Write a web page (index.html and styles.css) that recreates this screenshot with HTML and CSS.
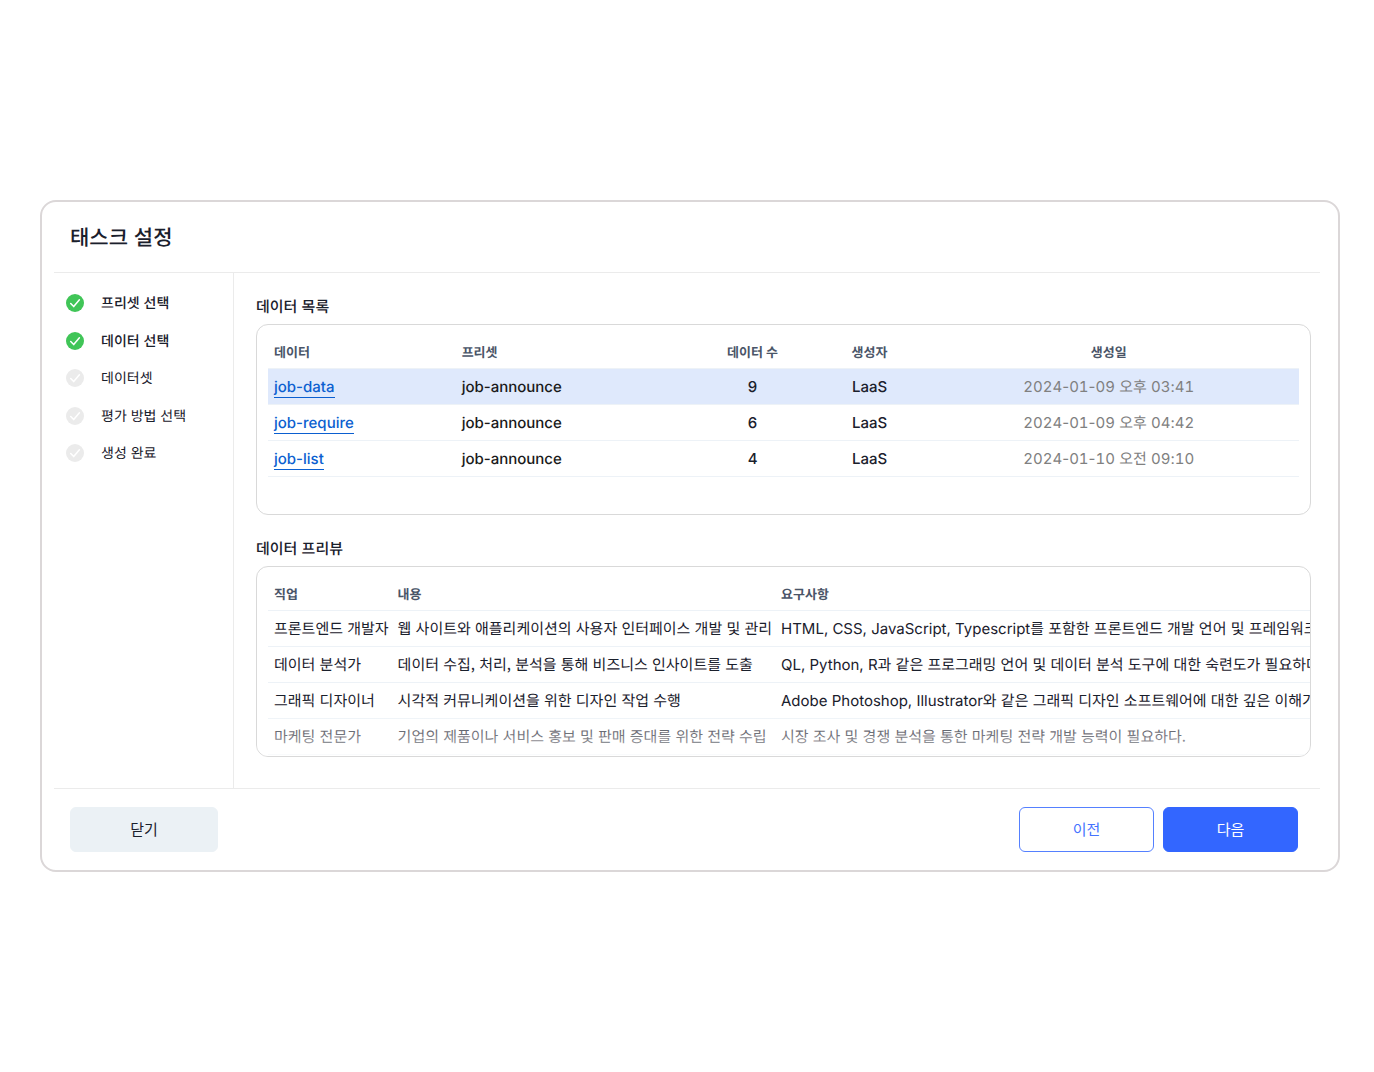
FILE: index.html
```html
<!DOCTYPE html>
<html lang="ko">
<head>
<meta charset="utf-8">
<meta name="viewport" content="width=device-width, initial-scale=1">
<title>태스크 설정</title>
<link rel="stylesheet" href="styles.css">
</head>
<body>
<main class="dialog">
  <header class="dialog-header"><h1>태스크 설정</h1></header>
  <div class="dialog-body">
    <aside class="sidebar">
      <ol class="steps">
        <li class="step done"><svg viewBox="0 0 18 18" aria-hidden="true"><circle cx="9" cy="9" r="9"/><path d="M4.7 9.5 7.7 12.6 13.4 5.8"/></svg>프리셋 선택</li>
        <li class="step done"><svg viewBox="0 0 18 18" aria-hidden="true"><circle cx="9" cy="9" r="9"/><path d="M4.7 9.5 7.7 12.6 13.4 5.8"/></svg>데이터 선택</li>
        <li class="step"><svg viewBox="0 0 18 18" aria-hidden="true"><circle cx="9" cy="9" r="9"/><path d="M4.7 9.5 7.7 12.6 13.4 5.8"/></svg>데이터셋</li>
        <li class="step"><svg viewBox="0 0 18 18" aria-hidden="true"><circle cx="9" cy="9" r="9"/><path d="M4.7 9.5 7.7 12.6 13.4 5.8"/></svg>평가 방법 선택</li>
        <li class="step"><svg viewBox="0 0 18 18" aria-hidden="true"><circle cx="9" cy="9" r="9"/><path d="M4.7 9.5 7.7 12.6 13.4 5.8"/></svg>생성 완료</li>
      </ol>
    </aside>
    <div class="content">
      <section>
        <h2>데이터 목록</h2>
        <div class="card">
          <table class="list">
            <colgroup><col class="col-data"><col class="col-preset"><col class="col-count"><col class="col-author"><col class="col-date"></colgroup>
            <thead>
              <tr><th>데이터</th><th>프리셋</th><th class="center">데이터 수</th><th class="center">생성자</th><th class="center">생성일</th></tr>
            </thead>
            <tbody>
              <tr class="selected"><td><a href="#">job-data</a></td><td class="preset">job-announce</td><td class="center">9</td><td class="center">LaaS</td><td class="center date"><b>2024</b>-<b>01</b>-<b>09</b> 오후 <b>03</b>:<b>41</b></td></tr>
              <tr><td><a href="#">job-require</a></td><td class="preset">job-announce</td><td class="center">6</td><td class="center">LaaS</td><td class="center date"><b>2024</b>-<b>01</b>-<b>09</b> 오후 <b>04</b>:<b>42</b></td></tr>
              <tr><td><a href="#">job-list</a></td><td class="preset">job-announce</td><td class="center">4</td><td class="center">LaaS</td><td class="center date"><b>2024</b>-<b>01</b>-<b>10</b> 오전 <b>09</b>:<b>10</b></td></tr>
            </tbody>
          </table>
        </div>
      </section>
      <section>
        <h2>데이터 프리뷰</h2>
        <div class="card preview-card">
          <table class="preview">
            <thead>
              <tr><th>직업</th><th>내용</th><th>요구사항</th></tr>
            </thead>
            <tbody>
              <tr><td>프론트엔드 개발자</td><td>웹 사이트와 애플리케이션의 사용자 인터페이스 개발 및 관리</td><td><span class="latin">HTML, CSS, JavaScript, Typescript</span>를 포함한 프론트엔드 개발 언어 및 프레임워크에</td></tr>
              <tr><td>데이터 분석가</td><td>데이터 수집, 처리, 분석을 통해 비즈니스 인사이트를 도출</td><td><span class="latin">QL, Python, R</span>과 같은 프로그래밍 언어 및 데이터 분석 도구에 대한 숙련도가 필요하다.</td></tr>
              <tr><td>그래픽 디자이너</td><td>시각적 커뮤니케이션을 위한 디자인 작업 수행</td><td><span class="latin">Adobe Photoshop, Illustrator</span>와 같은 그래픽 디자인 소프트웨어에 대한 깊은 이해가 필</td></tr>
              <tr><td>마케팅 전문가</td><td>기업의 제품이나 서비스 홍보 및 판매 증대를 위한 전략 수립</td><td>시장 조사 및 경쟁 분석을 통한 마케팅 전략 개발 능력이 필요하다.</td></tr>
            </tbody>
          </table>
        </div>
      </section>
    </div>
  </div>
  <footer class="dialog-footer">
    <button type="button" class="btn btn-close">닫기</button>
    <div class="actions">
      <button type="button" class="btn btn-prev">이전</button>
      <button type="button" class="btn btn-next">다음</button>
    </div>
  </footer>
</main>
</body>
</html>
```
FILE: styles.css
```css
* { box-sizing: border-box; }

body {
  margin: 0;
  padding: 200px 34px 200px 40px;
  background: #fff;
  color: #1a202c;
  font-family: "Noto Sans CJK KR", sans-serif;
  font-size: 15px;
  line-height: 20px;
  text-rendering: geometricPrecision;
}

h1, h2, ol { margin: 0; padding: 0; }

.dialog {
  padding: 0 18px 0 12px;
  border: 2px solid #dbd7d8;
  border-radius: 16px;
}

.dialog-header {
  padding: 20px 16px;
  border-bottom: 1px solid #ebebeb;
}

h1 {
  font-size: 21px;
  font-weight: 500;
  line-height: 30px;
}

.dialog-body { display: flex; }

.sidebar {
  flex: 0 0 180px;
  padding: 20px 12px;
  border-right: 1px solid #ebebeb;
}

.steps {
  display: flex;
  flex-direction: column;
  justify-content: space-between;
  min-height: 170px;
  list-style: none;
  font-size: 14px;
}

.step {
  display: flex;
  align-items: center;
  gap: 17px;
}

.step.done { font-weight: 500; }
.step svg { width: 18px; height: 18px; }
.step circle { fill: #ebebeb; }
.step.done circle { fill: #40c557; }

.step path {
  fill: none;
  stroke: #fff;
  stroke-width: 1.5;
  stroke-linecap: round;
  stroke-linejoin: round;
}

.content {
  display: flex;
  flex: 1;
  flex-direction: column;
  gap: 24px;
  min-width: 0;
  padding: 24px 9px 31px 22px;
}

h2 {
  margin-bottom: 7px;
  font-size: 15px;
  font-weight: 500;
  line-height: 20px;
}

.card {
  position: relative;
  min-height: 191px;
  padding: 11px;
  overflow: hidden;
  border: 1px solid #d9d9d9;
  border-radius: 12px;
}

.preview-card { padding-bottom: 0; }

.preview-card::after {
  content: "";
  position: absolute;
  right: 0;
  bottom: 0;
  left: 0;
  height: 48px;
  background: linear-gradient(rgba(255, 255, 255, 0), rgba(255, 255, 255, 0.7));
}

table {
  width: 100%;
  border-collapse: separate;
  border-spacing: 0;
  white-space: nowrap;
}

.list { table-layout: fixed; }
.col-data { width: 18.2%; }
.col-preset { width: 22.2%; }
.col-count { width: 13.2%; }
.col-author { width: 9.5%; }
.col-date { width: 36.9%; }

th, td {
  height: 36px;
  padding: 0 6px;
  border-bottom: 1px solid #edf2f7;
  text-align: left;
}

th {
  height: 33px;
  padding-top: 2px;
  color: #4a5568;
  font-family: Inter, "Noto Sans CJK KR", sans-serif;
  font-size: 13px;
  font-weight: 700;
}

.preview td { padding-right: 3px; }

.center { text-align: center; }
.latin, .list td { font-family: Inter, "Noto Sans CJK KR", sans-serif; }
.list td { font-weight: 500; }
.list .preset { color: #1a1a1a; }

.list .date {
  color: #808080;
  font-weight: 400;
}

.date b {
  font-variant-numeric: tabular-nums;
  font-weight: 400;
}

.selected td { background: #dfe9fc; }

.list a {
  display: inline-block;
  padding-top: 2px;
  border-bottom: 1px solid #0b5fd0;
  color: #0b5fd0;
  text-decoration: none;
}

.dialog-footer {
  display: flex;
  justify-content: space-between;
  padding: 18px 22px 18px 16px;
  border-top: 1px solid #ebebeb;
}

.actions { display: flex; gap: 9px; }

.btn {
  width: 135px;
  height: 45px;
  padding: 0 6px 2px;
  border: 1px solid #36f;
  border-radius: 6px;
  font: 400 15px/20px "Noto Sans CJK KR", sans-serif;
}

.btn-close {
  width: 148px;
  border-color: #ebf1f5;
  background: #ebf1f5;
  color: #1a202c;
}

.btn-prev { border-color: #5580ff; background: #fff; color: #4573ff; }
.btn-next { background: #36f; color: #fff; }
```
